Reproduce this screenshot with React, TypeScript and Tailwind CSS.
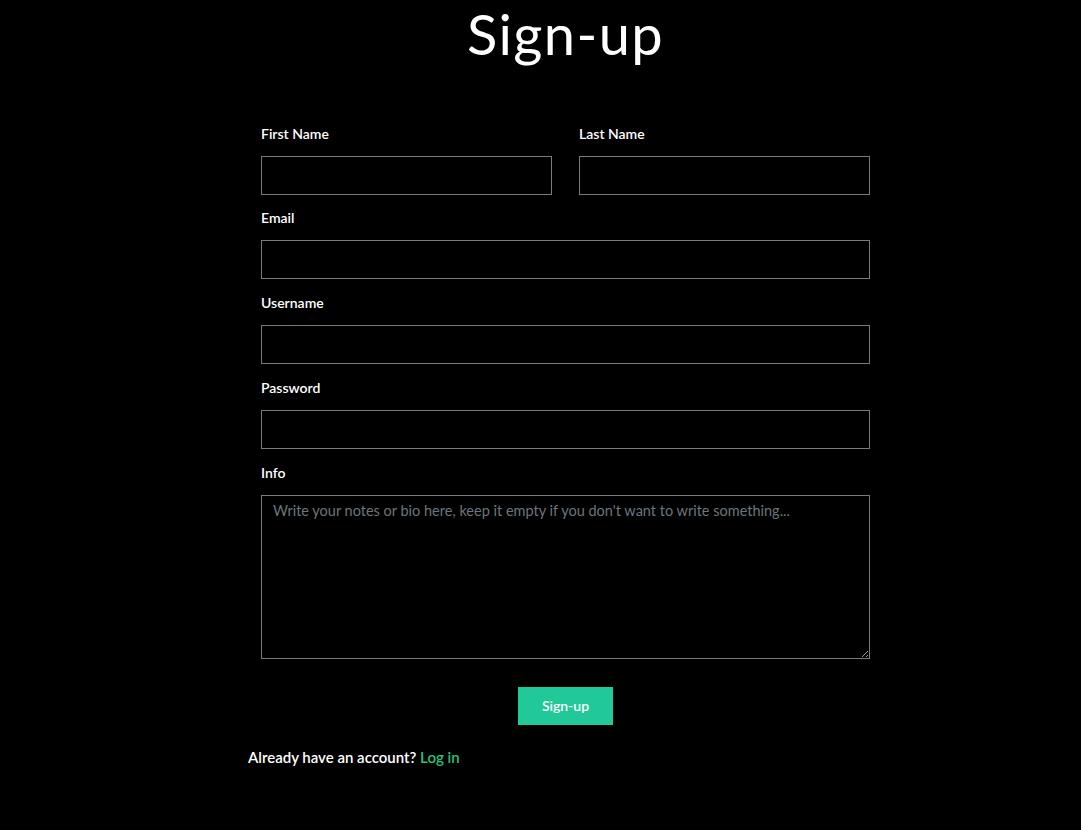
import { useState } from "react";

const inputClass =
	"w-full h-[39px] bg-black border border-[#7a7a7a] text-white px-3 outline-none";

function Field({ label, id, children }: { label: string; id: string; children?: React.ReactNode }) {
	return (
		<div className="flex flex-col">
			<label htmlFor={id} className="text-[14px] font-semibold text-white h-[31px] pt-[3px] mb-[5px]">
				{label}
			</label>
			{children ?? <input id={id} type="text" className={inputClass} />}
		</div>
	);
}

export default function App() {
	const [info, setInfo] = useState("");

	return (
		<div className="min-h-[830px] bg-black text-white font-['Lato',sans-serif]">
			<div className="w-[609px] ml-[261px]">
				<h1 className="text-center text-[56px] leading-[68px] font-normal tracking-wide">Sign-up</h1>

				<form className="mt-[52px] flex flex-col gap-[10px]" onSubmit={(e) => e.preventDefault()}>
					<div className="grid grid-cols-2 gap-[27px] -mb-[1px]">
						<Field label="First Name" id="firstName" />
						<Field label="Last Name" id="lastName" />
					</div>
					<Field label="Email" id="email" />
					<Field label="Username" id="username" />
					<Field label="Password" id="password">
						<input id="password" type="password" className={inputClass} />
					</Field>
					<Field label="Info" id="info">
						<textarea
							id="info"
							value={info}
							onChange={(e) => setInfo(e.target.value)}
							placeholder="Write your notes or bio here, keep it empty if you don't want to write something..."
							className="w-full h-[164px] bg-black border border-[#7a7a7a] text-white pl-[11px] pr-3 pt-[4px] text-[14.5px] outline-none placeholder:text-[#6c757d]"
						/>
					</Field>

					<div className="flex justify-center mt-[18px]">
						<button type="submit" className="w-[95px] h-[38px] pb-[2px] bg-[#20c997] text-white text-[14px] font-semibold">
							Sign-up
						</button>
					</div>
				</form>

				<p className="-ml-[13px] mt-[21px] text-[15px] font-semibold text-white">
					Already have an account? <a href="#" className="text-[#25c27d]">Log in</a>
				</p>
			</div>
		</div>
	);
}
